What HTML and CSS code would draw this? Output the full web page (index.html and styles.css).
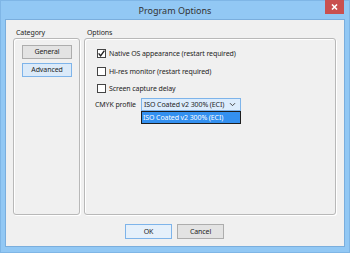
FILE: index.html
```html
<!DOCTYPE html>
<html>
    <head>
        <meta charset="UTF-8">
        <title>Program Options</title>
        <link rel="stylesheet" href="styles.css">
    </head>
    <body>
        <div class="window">
            <div class="titlebar">
                <span></span>
                <span class="title">Program Options</span>
                <span class="close">
                    <svg width="7" height="6" viewBox="0 0 7 6"><path d="M1 0.5 L6 5.5 M6 0.5 L1 5.5" stroke="#fff" stroke-width="1.6"/></svg>
                </span>
            </div>

            <div class="client">
                <div class="groups">
                    <div class="group group-cat">
                        <div class="legend">Category</div>
                        <div class="box cat-box">
                            <div class="btn">General</div>
                            <div class="btn btn-active">Advanced</div>
                        </div>
                    </div>

                    <div class="group group-opt">
                        <div class="legend">Options</div>
                        <div class="box opt-box">
                            <div class="row">
                                <span class="check">
                                    <svg width="9" height="9" viewBox="0 0 9 9"><path d="M1.6 4.4 L3.6 6.8 L7.4 1.6" fill="none" stroke="#222" stroke-width="1.4"/></svg>
                                </span>
                                <span>Native OS appearance (restart required)</span>
                            </div>
                            <div class="row">
                                <span class="check"></span>
                                <span>Hi-res monitor (restart required)</span>
                            </div>
                            <div class="row">
                                <span class="check"></span>
                                <span>Screen capture delay</span>
                            </div>
                            <div class="row row-cmyk">
                                <span class="cmyk-label">CMYK profile</span>
                                <div class="combo">
                                    <div class="select">
                                        <span>ISO Coated v2 300% (ECI)</span>
                                        <svg width="7" height="5" viewBox="0 0 7 5"><path d="M1 1.2 L3.5 3.7 L6 1.2" fill="none" stroke="#444" stroke-width="1"/></svg>
                                    </div>
                                    <div class="dropdown">
                                        <div class="item">ISO Coated v2 300% (ECI)</div>
                                    </div>
                                </div>
                            </div>
                        </div>
                    </div>
                </div>

                <div class="buttons">
                    <div class="btn btn-default">OK</div>
                    <div class="btn">Cancel</div>
                </div>
            </div>
        </div>
    </body>
</html>
```

FILE: styles.css
```css
* {
    box-sizing: border-box;
    font-family: "Noto Sans", "Open Sans", Arial, sans-serif;
    white-space: nowrap;
}

body {
    margin: 0;
    background: #ffffff;
}

.window {
    width: 350px;
    height: 253px;
    background: #92c8f4;
    border: 1px solid #7fb6e6;
    padding: 0 4px 5px 4px;
    display: flex;
    flex-direction: column;
}

.titlebar {
    height: 18px;
    display: grid;
    grid-template-columns: 1fr auto 1fr;
    align-items: start;
}

.title {
    font-size: 9px;
    color: #333;
    line-height: 19px;
}

.close {
    justify-self: end;
    margin-right: 1px;
    margin-top: -1px;
    width: 19px;
    height: 14px;
    background: #c9504f;
    display: flex;
    align-items: center;
    justify-content: center;
}

.close svg {
    display: block;
}

.client {
    flex: 1;
    background: #f0f0f0;
    border: 1px solid #7aaedd;
    padding: 7px 8px 7px 7px;
    display: flex;
    flex-direction: column;
}

.groups {
    flex: 1;
    display: flex;
    gap: 4px;
}

.group {
    display: flex;
    flex-direction: column;
}

.group-cat {
    width: 67px;
}

.group-opt {
    flex: 1;
}

.legend {
    font-size: 7px;
    letter-spacing: -0.1px;
    color: #1e1e1e;
    height: 11px;
    line-height: 11px;
    padding-left: 3px;
}

.box {
    flex: 1;
    border: 1px solid #b8b8b8;
    border-radius: 3px;
    box-shadow: inset 1px 1px 0 #fff, 1px 1px 0 #fff;
}

.cat-box {
    padding: 6px 7px 0 8px;
    display: flex;
    flex-direction: column;
    gap: 4px;
}

.btn {
    height: 14px;
    border: 1px solid #adadad;
    background: #e3e3e3;
    font-size: 7px;
    letter-spacing: -0.1px;
    color: #1e1e1e;
    text-align: center;
    line-height: 12px;
}

.btn-active {
    background: #dbeaf9;
    border-color: #7eb4ea;
}

.opt-box {
    padding: 6px 0 0 12px;
    display: flex;
    flex-direction: column;
}

.row {
    display: flex;
    align-items: center;
    gap: 3px;
    height: 17.5px;
    font-size: 7px;
    letter-spacing: -0.1px;
    color: #1e1e1e;
}

.check {
    width: 9px;
    height: 9px;
    border: 1px solid #444;
    background: #fff;
    display: flex;
}

.check svg {
    margin: -1px;
}

.row-cmyk {
    margin-left: -2px;
    align-items: flex-start;
    padding-top: 0;
}

.cmyk-label {
    width: 43px;
    line-height: 13px;
}

.combo {
    width: 100px;
}

.select {
    height: 13px;
    border: 1px solid #7eb4ea;
    background: #dcecfc;
    display: flex;
    align-items: center;
    justify-content: space-between;
    padding: 0 4px 0 2px;
    line-height: 11px;
}

.dropdown {
    border: 1px solid #1e1e1e;
    height: 13px;
    background: #fff;
}

.item {
    height: 11px;
    background: #3390f0;
    color: #fff;
    line-height: 11px;
    padding-left: 1px;
}

.buttons {
    display: flex;
    justify-content: center;
    gap: 5px;
    padding-top: 9px;
}

.buttons .btn {
    width: 47px;
    height: 15px;
    line-height: 13px;
}

.btn-default {
    border-color: #7eb4ea;
    background: #e5f0fb;
}
```
